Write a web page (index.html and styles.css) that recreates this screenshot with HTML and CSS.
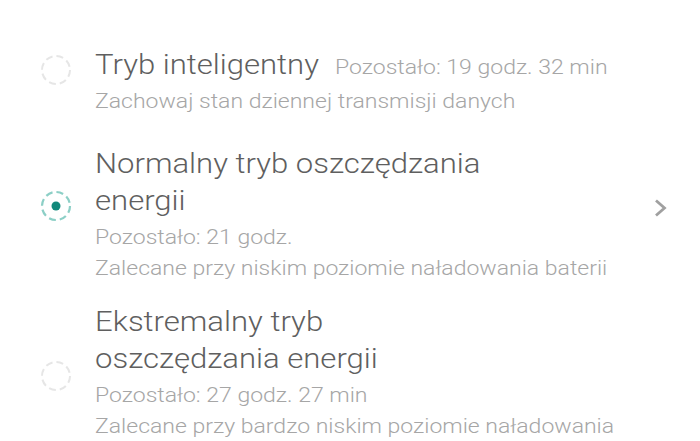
FILE: index.html
```html
<!DOCTYPE html>
<html lang="pl">
<head>
<meta charset="utf-8">
<link rel="stylesheet" href="styles.css">
</head>
<body>
<div class="list">
  <div class="item item-1">
    <div class="icon">
      <svg width="32" height="32" viewBox="0 0 32 32"><circle cx="16" cy="16" r="14" fill="none" stroke="#e6e6e6" stroke-width="2" stroke-dasharray="7 4"/></svg>
    </div>
    <div class="text">
      <div class="title">Tryb inteligentny<span class="inline-sub">Pozostało: 19 godz. 32 min</span></div>
      <div class="sub">Zachowaj stan dziennej transmisji danych</div>
    </div>
  </div>
  <div class="item item-2">
    <div class="icon">
      <svg width="32" height="32" viewBox="0 0 32 32"><circle cx="16" cy="16" r="14" fill="none" stroke="#8ccfc6" stroke-width="2.2" stroke-dasharray="7 4"/><circle cx="16" cy="16" r="4.5" fill="#12897b"/></svg>
    </div>
    <div class="text">
      <div class="title narrow">Normalny tryb oszczędzania energii</div>
      <div class="sub first">Pozostało: 21 godz.</div>
      <div class="sub">Zalecane przy niskim poziomie naładowania baterii</div>
    </div>
    <div class="chev">
      <svg width="16" height="18" viewBox="0 0 16 18"><path d="M3 1.5 L11.5 9 L3 16.5" fill="none" stroke="#a0a0a0" stroke-width="2.8"/></svg>
    </div>
  </div>
  <div class="item item-3">
    <div class="icon">
      <svg width="32" height="32" viewBox="0 0 32 32"><circle cx="16" cy="16" r="14" fill="none" stroke="#e6e6e6" stroke-width="2" stroke-dasharray="7 4"/></svg>
    </div>
    <div class="text">
      <div class="title narrow">Ekstremalny tryb oszczędzania energii</div>
      <div class="sub first">Pozostało: 27 godz. 27 min</div>
      <div class="sub">Zalecane przy bardzo niskim poziomie naładowania baterii</div>
    </div>
  </div>
</div>
</body>
</html>
```

FILE: styles.css
```css
html, body {
  margin: 0;
  padding: 0;
  background: #ffffff;
  overflow: hidden;
  height: 441px;
}
body {
  font-family: Roboto, "Noto Sans", sans-serif;
  font-weight: 300;
}
.list {
  display: flex;
  flex-direction: column;
  padding-top: 47px;
}
.item {
  display: flex;
  align-items: center;
}
.item-2 { margin-top: 29px; }
.item-3 { margin-top: 20px; }
.icon {
  width: 32px;
  height: 32px;
  margin-left: 40px;
  margin-right: 23px;
  flex: none;
}
.item-1 .icon { margin-bottom: 24px; }
.item-2 .icon { margin-bottom: 18px; }
.item-3 .icon { margin-bottom: 26px; }
.icon svg { display: block; }
.text {
  width: 480px;
  flex: none;
  transform: scaleX(1.15);
  transform-origin: left center;
}
.title {
  font-size: 27px;
  line-height: 37px;
  color: #5f5f5f;
}
.title.narrow { width: 358px; }
.inline-sub {
  font-size: 20px;
  color: #a6a6a6;
  margin-left: 14px;
}
.sub {
  font-size: 20px;
  line-height: 31px;
  color: #a6a6a6;
}
.sub.first { margin-top: 2px; }
.chev {
  margin-left: auto;
  margin-right: 31px;
  margin-bottom: 14px;
  width: 16px;
  height: 18px;
}
.chev svg { display: block; }
```
